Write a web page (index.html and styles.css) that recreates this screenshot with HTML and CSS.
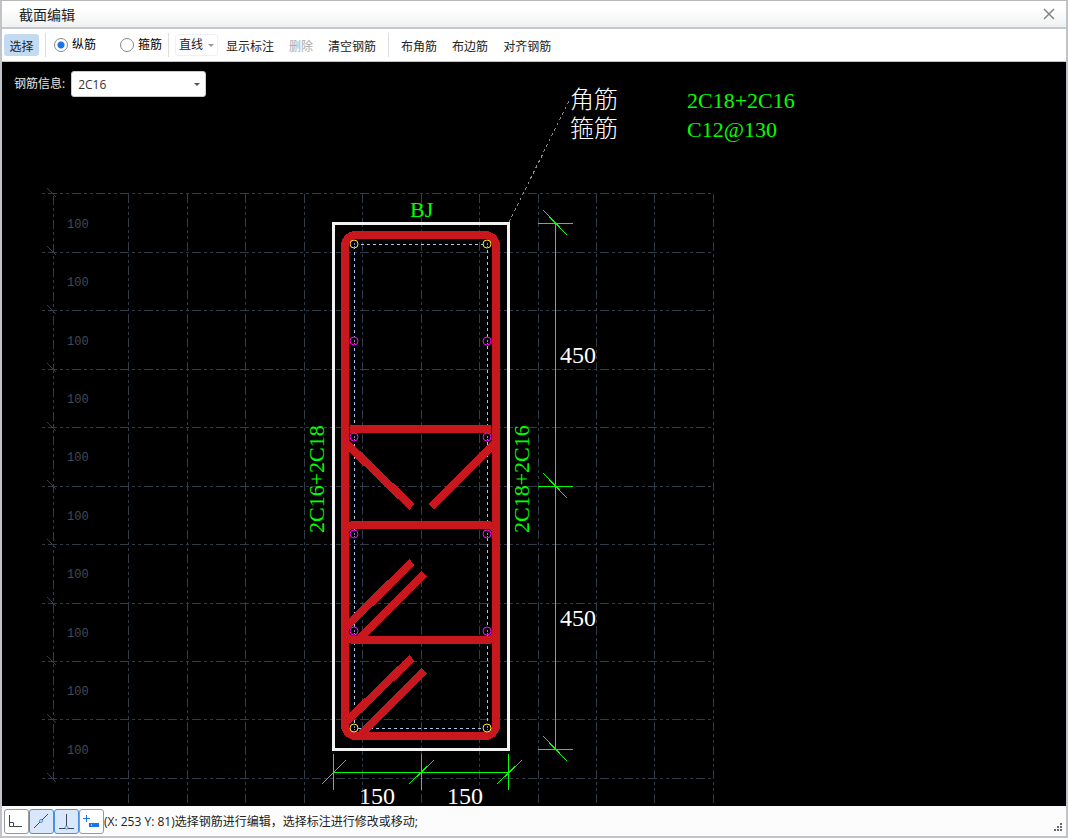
FILE: index.html
```html
<!DOCTYPE html>
<html lang="zh-CN">
<head>
<meta charset="utf-8">
<title>截面编辑</title>
<link rel="stylesheet" href="styles.css">
</head>
<body>
<div class="window">
  <header class="titlebar">
    <h1 class="title">截面编辑</h1>
    <button class="close" type="button" aria-label="关闭">
      <svg width="12" height="12" viewBox="0 0 12 12"><path d="M1 1L11 11M11 1L1 11"/></svg>
    </button>
  </header>
  <div class="toolbar">
    <button class="tool active" type="button">选择</button>
    <span class="divider"></span>
    <label class="mode"><input type="radio" name="mode" checked>纵筋</label>
    <label class="mode"><input type="radio" name="mode">箍筋</label>
    <span class="divider"></span>
    <button class="tool line-tool" type="button">直线<span class="caret"></span></button>
    <button class="tool" type="button">显示标注</button>
    <button class="tool" type="button" disabled>删除</button>
    <button class="tool" type="button">清空钢筋</button>
    <span class="divider"></span>
    <button class="tool" type="button">布角筋</button>
    <button class="tool" type="button">布边筋</button>
    <button class="tool" type="button">对齐钢筋</button>
  </div>
  <main class="stage">
    <svg class="drawing">
      <g transform="translate(-2 -62)">
        <g class="grid">
          <path class="rows" d="M42 193.5H714M42 252.5H714M42 310.5H714M42 369.5H714M42 427.5H714M42 486.5H714M42 544.5H714M42 603.5H714M42 661.5H714M42 719.5H714M42 778.5H714"/>
          <path d="M128.5 194V806M187.5 194V806M245.5 194V806M304.5 194V806M362.5 194V806M421.5 194V806M479.5 194V806M538.5 194V806M596.5 194V806M654.5 194V806M713.5 194V806M53.5 196V779"/>
          <path class="ticks" d="M47 188l9 9M47 246l9 9M47 305l9 9M47 363l9 9M47 422l9 9M47 480l9 9M47 539l9 9M47 597l9 9M47 656l9 9M47 714l9 9M47 773l9 9"/>
        </g>
        <g class="scale">
          <text x="67" y="228">100</text><text x="67" y="286">100</text>
          <text x="67" y="345">100</text><text x="67" y="403">100</text>
          <text x="67" y="461">100</text><text x="67" y="520">100</text>
          <text x="67" y="578">100</text><text x="67" y="637">100</text>
          <text x="67" y="695">100</text><text x="67" y="754">100</text>
        </g>
        <path class="leader" d="M509 222L570 99"/>
        <rect class="outline" x="333.5" y="223.5" width="175" height="526"/>
        <rect class="axis" x="354.5" y="244.5" width="133" height="484"/>
        <g class="stirrup">
          <rect x="345" y="235" width="151" height="501" rx="11"/>
          <path d="M350 429H491M346 529Q348 525 356 525H486Q493 525 495 529M346 636Q348 640 356 640H486Q493 640 495 636"/>
          <path d="M345 442L412 507M496 442L431 507M346 627L412 562M360 638L424 574M346 722L412 658M361 734L424 671"/>
        </g>
        <g class="bar corner">
          <circle cx="354" cy="244" r="4"/><circle cx="487" cy="244" r="4"/>
          <circle cx="354" cy="728" r="4"/><circle cx="487" cy="728" r="4"/>
        </g>
        <g class="bar side">
          <circle cx="354" cy="341" r="4"/><circle cx="487" cy="341" r="4"/>
          <circle cx="354" cy="437" r="4"/><circle cx="487" cy="437" r="4"/>
          <circle cx="354" cy="534" r="4"/><circle cx="487" cy="534" r="4"/>
          <circle cx="354" cy="631" r="4"/><circle cx="487" cy="631" r="4"/>
        </g>
        <path class="bar-mark" d="M354.5 243v4M487.5 243v4M354.5 340v4M487.5 340v4M354.5 436v4M487.5 436v4M354.5 533v4M487.5 533v4M354.5 630v4M487.5 630v4M354.5 726v4M487.5 726v4"/>
        <g class="dimension">
          <path d="M555.5 223V750M538 223.5H573M538 486.5H573M538 749.5H573M333 772.5H509M333.5 754V790M421.5 754V790M508.5 754V790"/>
          <path class="slash" d="M543 210l24 25M543 473l24 25M543 736l24 25M322 784l24 -24M409 784l25 -24M497 784l25 -24"/>
        </g>
        <g class="size">
          <text x="560" y="363">450</text><text x="560" y="626">450</text>
          <text x="359" y="804">150</text><text x="447" y="804">150</text>
        </g>
        <g class="name">
          <text x="570" y="108">角筋</text><text x="570" y="137">箍筋</text>
        </g>
        <g class="spec">
          <text x="687" y="108">2C18+2C16</text><text x="687" y="137">C12@130</text>
          <text x="410" y="217">BJ</text>
          <text transform="translate(324 533) rotate(-90)">2C16+2C18</text>
          <text transform="translate(529 533) rotate(-90)">2C18+2C16</text>
        </g>
      </g>
    </svg>
    <div class="info">
      <label for="rebar">钢筋信息:</label>
      <div class="picker">
        <select id="rebar"><option>2C16</option></select>
        <span class="caret"></span>
      </div>
    </div>
  </main>
  <footer class="status">
    <button class="snap" type="button" aria-label="正交">
      <svg width="23" height="23" viewBox="0 0 23 23"><path class="ink" d="M4.500 5V16.500H17M5 12.500H8.500V16"/></svg>
    </button>
    <button class="snap on" type="button" aria-label="中点">
      <svg width="23" height="23" viewBox="0 0 23 23"><path class="ink" d="M4 18L18 4"/><circle class="dot" cx="11" cy="11" r="1.500"/></svg>
    </button>
    <button class="snap on" type="button" aria-label="垂点">
      <svg width="23" height="23" viewBox="0 0 23 23"><path class="ink" d="M11.500 4V17M4 18.500H19"/><circle class="dot" cx="11.500" cy="17.500" r="1.500"/></svg>
    </button>
    <button class="snap" type="button" aria-label="动态输入">
      <svg width="23" height="23" viewBox="0 0 23 23"><path class="plus" d="M3 8.500H10M6.500 5V12"/><rect class="field" x="9" y="13" width="10" height="4"/><path class="slot" d="M11.500 14V16"/></svg>
    </button>
    <span class="message">(X: 253 Y: 81)选择钢筋进行编辑，选择标注进行修改或移动;</span>
    <svg class="grip" width="8" height="8" viewBox="0 0 8 8"><path d="M6 0h2v2h-2zM3 3h2v2h-2zM6 3h2v2h-2zM0 6h2v2h-2zM3 6h2v2h-2zM6 6h2v2h-2z"/></svg>
  </footer>
</div>
</body>
</html>
```
FILE: styles.css
```css
* { box-sizing: border-box; }

body {
  margin: 0;
  font: 12px/16px "Open Sans", "Noto Sans CJK SC", sans-serif;
  color: #222;
}

button, select { font: inherit; color: inherit; }

.window {
  display: flex;
  flex-direction: column;
  height: 100vh;
  border: 2px solid #c0c3c7;
  border-top: 1px solid #b8b8b8;
  background: #fff;
}

.titlebar {
  display: flex;
  align-items: center;
  justify-content: space-between;
  height: 28px;
  padding: 0 11px 0 17px;
  border-bottom: 2px solid #c3c8cc;
  background: linear-gradient(#fff 30%, #f0f1f2);
}

.title { margin: 0; padding-top: 1px; font-size: 14px; line-height: 20px; font-weight: 400; }

.close { display: flex; padding: 0; border: 0; background: none; }
.close path { stroke: #858585; stroke-width: 1.500; fill: none; }

.toolbar {
  display: flex;
  align-items: center;
  height: 33px;
  padding: 0 2px;
  border-bottom: 1px solid #c3c8c8;
}

.tool {
  height: 22px;
  padding: 3px 0 0;
  margin-right: 15px;
  border: 0;
  border-radius: 3px;
  background: none;
  white-space: nowrap;
}
.tool:disabled { color: #aaa; }
.tool.active { width: 35px; margin-right: 6px; background: #c2daf2; }
.line-tool {
  display: flex;
  align-items: center;
  gap: 5px;
  padding: 0 3px;
  margin-right: 8px;
  border: 1px solid #f0f0f0;
}

.divider { width: 1px; height: 24px; margin-right: 8px; background: #ddd; }
.tool + .divider { margin-left: -3px; margin-right: 12px; }
.tool.active + .divider { margin-left: 0; margin-right: 8px; }

.mode { display: flex; align-items: center; gap: 4px; margin-right: 24px; color: #000; }
.mode + .divider { margin-left: -18px; margin-right: 6px; }
.mode input {
  appearance: none;
  width: 14px;
  height: 14px;
  margin: 0;
  border: 1px solid #888;
  border-radius: 50%;
  background: #fff;
}
.mode input:checked { background: radial-gradient(circle, #1976e0 3px, #fff 4px); }

.caret {
  width: 0;
  height: 0;
  border: 3px solid transparent;
  border-top-color: #555;
  border-bottom: 0;
}
.line-tool .caret { border-top-color: #999; }

.stage { position: relative; flex: 1; min-height: 0; background: #000; overflow: hidden; }
.drawing { display: block; width: 100%; height: 100%; }

.info {
  position: absolute;
  top: 9px;
  left: 12px;
  display: flex;
  align-items: center;
  gap: 6px;
  color: #e8e8e8;
}
.picker { position: relative; }
.picker select {
  display: block;
  appearance: none;
  width: 135px;
  height: 26px;
  padding: 1px 6px 0;
  border: 1px solid #ccc;
  border-radius: 3px;
  background: #fff;
  color: #333;
}
.picker .caret { position: absolute; top: 12px; right: 6px; pointer-events: none; }

.drawing path, .drawing rect, .drawing circle { fill: none; }
.grid { stroke: #323b48; stroke-dasharray: 9 3 3 3 3 3; shape-rendering: crispEdges; }
.grid .rows { stroke-dashoffset: 18; }
.grid .ticks { stroke-dasharray: none; }
.scale { fill: #414b5b; font: 12px "Liberation Mono", monospace; }
.leader { stroke: #8c8c80; stroke-dasharray: 3 3; shape-rendering: crispEdges; }
.outline { stroke: #f2f2f2; stroke-width: 3; shape-rendering: crispEdges; }
.axis { stroke: #a9c8f0; stroke-dasharray: 3 3; shape-rendering: crispEdges; }
.stirrup { stroke: #c8181e; stroke-width: 8; shape-rendering: crispEdges; }
.drawing .bar circle { fill: #000; }
.corner { stroke: #ffe428; }
.side { stroke: #f0f; }
.bar-mark { stroke: #7f94b8; stroke-dasharray: 2 1; shape-rendering: crispEdges; }
.dimension { stroke: #0f0; shape-rendering: crispEdges; }
.size { fill: #fff; font: 24px "Liberation Serif", serif; }
.name { fill: #fff; font: 300 24px "Noto Sans CJK SC", sans-serif; }
.spec { fill: #0f0; font: 22px "Liberation Serif", serif; }

.status {
  display: flex;
  align-items: center;
  height: 30px;
  padding: 0 4px 0 2px;
  background: #fcfcfc;
}
.snap {
  display: flex;
  width: 25px;
  height: 25px;
  padding: 0;
  border: 1px solid #999;
  border-radius: 3px;
  background: #fff;
}
.snap.on { border-color: #4a8fe0; background: #d8e7fc; }
.ink { fill: none; stroke: #3d4656; }
.dot { fill: #d8e7fc; stroke: #4a8fe0; }
.plus { fill: none; stroke: #1a73e8; stroke-width: 1; }
.field { fill: #1a73e8; }
.slot { stroke: #9cc4f5; }
.message { padding-top: 2px; white-space: nowrap; }
.grip { margin: 12px 0 0 auto; fill: #667; }
```
